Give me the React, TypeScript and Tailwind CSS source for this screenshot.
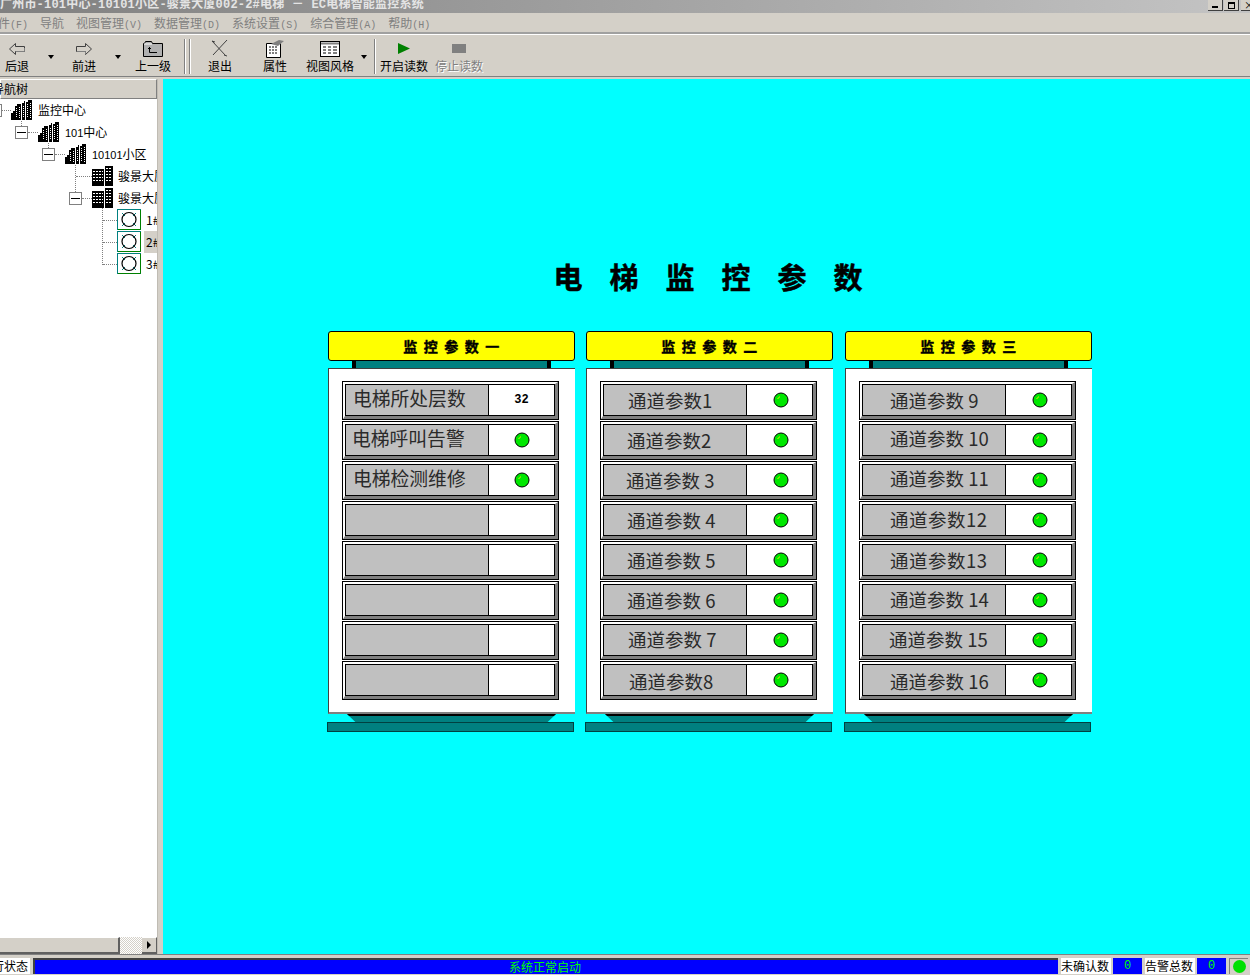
import { ReactNode } from 'react';

function Building({ narrow = false }: { narrow?: boolean }) {
  if (narrow) {
    return (
      <svg width="21" height="20" viewBox="0 0 21 20" className="shrink-0">
        <path d="M0 3h12v17H0zM13 0h8v20h-8z" fill="#000" />
        <path d="M1 5.500h10M1 8.500h10M1 11.500h10M1 14.500h10M14 2.500h6M14 5.500h6M14 8.500h6M14 11.500h6M14 14.500h6" stroke="#fff" strokeWidth="1" strokeDasharray="2 1" />
      </svg>
    );
  }
  return (
    <svg width="21" height="20" viewBox="0 0 21 20" className="shrink-0">
      <path d="M0 13h2v-2h2V6h2V4h4v16H0zM11 3h2V1h1v19h-3zM15 2h2V0h4v20h-6z" fill="#000" />
      <path d="M5.500 8v10M8.500 7v11M16.500 4v14M19.500 3v15M12.500 6v12" stroke="#fff" strokeWidth="1" strokeDasharray="1 1" />
    </svg>
  );
}

function Expander({ shift = '' }: { shift?: string }) {
  return (
    <span className={`w-[13px] h-[13px] shrink-0 border border-[#808080] bg-white flex items-center justify-center ${shift}`}>
      <span className="w-[9px] h-px bg-black" />
    </span>
  );
}

function Dash({ w }: { w: string }) {
  return <span className={`${w} shrink-0 border-t border-dotted border-[#808080]`} />;
}

function Lift() {
  return (
    <svg width="24" height="21" viewBox="0 0 24 21" className="shrink-0 -mt-[2px]">
      <rect x="0.500" y="0.500" width="23" height="20" fill="#fff" stroke="#008080" />
      <path d="M23.500 1v19.500H1" fill="none" stroke="#008000" />
      <path d="M5 4l3 3M19 4l-3 3M5 17l3-3M19 17l-3-3" stroke="#008080" strokeWidth="1" />
      <circle cx="12" cy="10.500" r="7" fill="none" stroke="#000" strokeWidth="1.200" />
    </svg>
  );
}

function Led() {
  return (
    <svg width="16" height="16" viewBox="0 0 16 16">
      <circle cx="8" cy="8" r="7" fill="#00e800" stroke="#000" strokeWidth="1" />
      <path d="M4 7l3-3v1l-2 2z" fill="#e8e800" />
    </svg>
  );
}

function Arrow() {
  return <span className="w-0 h-0 border-x-[3px] border-x-transparent border-t-[4px] border-t-black" />;
}

function ToolButton({ w, label, icon, disabled = false }: { w: string; label: string; icon: ReactNode; disabled?: boolean }) {
  return (
    <div className={`${w} shrink-0 flex flex-col items-center pt-[4px]`}>
      <div className="h-[19px] flex items-center justify-center">{icon}</div>
      <span className={`-mt-[1px] text-[12px] leading-[17px] whitespace-nowrap ${disabled ? 'text-[#808080] [text-shadow:1px_1px_0_#fff]' : 'text-black'}`}>
        {label}
      </span>
    </div>
  );
}

function Divider() {
  return <span className="w-[2px] h-[35px] shrink-0 mt-[4px] border-l border-l-[#808080] border-r border-r-white" />;
}

type RowData = { label?: string; value?: ReactNode; offset?: string };

function Row({ label, value, offset }: RowData) {
  return (
    <div className="h-[39px] mb-px border border-black">
      <div className="h-full border-t-2 border-l-2 border-t-white border-l-white border-b-[3px] border-r-[3px] border-b-[#808080] border-r-[#808080]">
        <div className="h-full flex border border-black">
          <div className={`w-[143px] shrink-0 bg-[#c0c0c0] border-r border-black leading-[26px] text-[#2a2a2a] whitespace-nowrap ${offset ?? ''}`}>
            {label}
          </div>
          <div className="flex-1 bg-white flex items-center justify-center pb-[1px]">{value}</div>
        </div>
      </div>
    </div>
  );
}

function Panel({ title, rows, margin }: { title: string; rows: RowData[]; margin: string }) {
  return (
    <div className={`w-[247px] shrink-0 ${margin}`}>
      <div className="h-[30px] bg-[#ffff00] border border-black rounded-[3px] flex items-center justify-center pl-[6px] text-[14px] font-bold tracking-[6.500px] text-black [-webkit-text-stroke:0.400px_black]">
        {title}
      </div>
      <div className="h-[7px] mx-[24px] bg-[#008080] border-x-[4px] border-black" />
      <div className="h-[346px] bg-white border-t border-l border-[#404040] border-b-2 border-b-[#808080] pt-[12px] pl-[13px] pr-[16px]">
        {rows.map((r, i) => (
          <Row key={i} label={r.label} value={r.value} offset={r.offset} />
        ))}
      </div>
      <div className="h-[8px] mx-[19px] bg-[#008080] border-t-2 border-black [clip-path:polygon(0_0,100%_0,96%_100%,4%_100%)]" />
      <div className="h-[10px] -ml-px mr-px bg-[#008080] border border-[#004040]" />
    </div>
  );
}

const moved = <span className="flex ml-[3px]"><Led /></span>;
const blank: RowData = {};
const panelOne: RowData[] = [
  { label: '电梯所处层数', value: <span className="text-[12px] font-bold font-['Liberation_Mono'] text-black">32</span>, offset: 'pl-[7px] text-[18.800px]' },
  { label: '电梯呼叫告警', value: <Led />, offset: 'pl-[6px] text-[18.800px]' },
  { label: '电梯检测维修', value: <Led />, offset: 'pl-[7px] text-[18.800px]' },
  blank, blank, blank, blank, blank,
];
const panelTwo: RowData[] = [
  { label: '通道参数1', value: moved, offset: 'pl-[24px] pt-[2px] text-[18.500px]' },
  { label: '通道参数2', value: moved, offset: 'pl-[23px] pt-[2px] text-[18.500px]' },
  { label: '通道参数 3', value: moved, offset: 'pl-[22px] pt-[2px] text-[18.500px]' },
  { label: '通道参数 4', value: moved, offset: 'pl-[23px] pt-[2px] text-[18.500px]' },
  { label: '通道参数 5', value: moved, offset: 'pl-[23px] pt-[2px] text-[18.500px]' },
  { label: '通道参数 6', value: moved, offset: 'pl-[23px] pt-[2px] text-[18.500px]' },
  { label: '通道参数 7', value: moved, offset: 'pl-[24px] pt-[1px] text-[18.500px]' },
  { label: '通道参数8', value: moved, offset: 'pl-[25px] pt-[3px] text-[18.500px]' },
];
const panelThree: RowData[] = [
  { label: '通道参数 9', value: moved, offset: 'pl-[27px] pt-[2px] text-[18.500px]' },
  { label: '通道参数 10', value: moved, offset: 'pl-[27px] text-[18.500px]' },
  { label: '通道参数 11', value: moved, offset: 'pl-[27px] text-[18.500px]' },
  { label: '通道参数12', value: moved, offset: 'pl-[27px] pt-[1px] text-[18.500px] tracking-[0.500px]' },
  { label: '通道参数13', value: moved, offset: 'pl-[27px] pt-[2px] text-[18.500px] tracking-[0.500px]' },
  { label: '通道参数 14', value: moved, offset: 'pl-[27px] pt-[1px] text-[18.500px]' },
  { label: '通道参数 15', value: moved, offset: 'pl-[26px] pt-[1px] text-[18.500px]' },
  { label: '通道参数 16', value: moved, offset: 'pl-[27px] pt-[3px] text-[18.500px]' },
];

const menus = [
  ['导航', ''],
  ['视图管理', '(V)'],
  ['数据管理', '(D)'],
  ['系统设置', '(S)'],
  ['综合管理', '(A)'],
  ['帮助', '(H)'],
];

export default function App() {
  return (
    <div className="w-[1250px] h-[975px] overflow-hidden flex flex-col bg-[#d4d0c8] font-['Noto_Sans_CJK_SC','Liberation_Sans',sans-serif]">
      {/* title bar, cut off at the top of the shot */}
      <div className="h-[13px] shrink-0 flex items-start justify-between overflow-hidden bg-gradient-to-r from-[#808080] to-[#c4c4c4]">
        <span className="-mt-[4px] text-[12px] leading-[18px] font-bold tracking-[0.200px] text-[#e4e4e4] whitespace-pre font-['Liberation_Mono','Noto_Sans_CJK_SC',monospace]">
          广州市-101中心-10101小区-骏景大厦002-2#电梯 － EC电梯智能监控系统
        </span>
        <div className="flex gap-px mr-[-6px]">
          <span className="w-[15px] h-[11px] bg-[#d4d0c8] border-r border-b border-[#404040] flex items-end justify-center pb-[2px]"><span className="w-[6px] h-[2px] bg-black" /></span>
          <span className="w-[15px] h-[11px] bg-[#d4d0c8] border-r border-b border-[#404040] flex items-center justify-center"><span className="w-[7px] h-[7px] border border-black border-t-2" /></span>
          <span className="w-[15px] h-[11px] ml-px bg-[#d4d0c8] border-b border-[#404040] text-[10px] leading-[9px] pl-[3px] text-black">×</span>
        </div>
      </div>

      {/* menu */}
      <div className="h-[21px] shrink-0 flex items-center gap-[12px] pt-[2px] border-b-2 border-b-[#a0a0a0] text-[12px] text-[#808080] whitespace-nowrap">
        <span className="-ml-[2px]">件<span className="text-[10px] font-['Liberation_Mono']">(F)</span></span>
        {menus.map(([name, key]) => (
          <span key={name}>
            {name}
            <span className="text-[10px] font-['Liberation_Mono']">{key}</span>
          </span>
        ))}
      </div>

      {/* toolbar */}
      <div className="h-[43px] shrink-0 flex border-t border-t-white border-b border-b-[#808080]">
        <ToolButton w="w-[34px]" label="后退" icon={
          <svg width="16" height="12" viewBox="0 0 16 12"><path d="M6.500.5L.5 6l6 5.500V8.500h9v-5h-9z" fill="#d4d0c8" stroke="#404040" /><path d="M7 8.500h8.500V5" fill="none" stroke="#808080" /></svg>
        } />
        <div className="w-[34px] shrink-0 flex justify-center pt-[20px]"><span className="flex"><Arrow /></span></div>
        <ToolButton w="w-[32px]" label="前进" icon={
          <svg width="16" height="12" viewBox="0 0 16 12"><path d="M9.500.5l6 5.500-6 5.500V8.500h-9v-5h9z" fill="#d4d0c8" stroke="#404040" /><path d="M1 8.500h8.500V11" fill="none" stroke="#808080" /></svg>
        } />
        <div className="w-[35px] shrink-0 flex justify-center pt-[20px]"><span className="flex"><Arrow /></span></div>
        <ToolButton w="w-[36px]" label="上一级" icon={
          <svg width="20" height="17" viewBox="0 0 20 17">
            <path d="M.5 16.500V3.500h1l1-2h6l1 2h10v13z" fill="#b0b0b0" stroke="#000" />
            <path d="M1 4h8" stroke="#fff" />
            <path d="M5 8.500h3M6.500 7v5.500H14" fill="none" stroke="#000" />
          </svg>
        } />
        <span className="w-[13px] shrink-0" />
        <Divider />
        <span className="w-[3px] shrink-0" />
        <Divider />
        <ToolButton w="w-[58px]" label="退出" icon={
          <svg width="18" height="18" viewBox="0 0 18 18"><path d="M1 1l14 15M16 0L2 15M1 1l3 1M16 16l-3-1" fill="none" stroke="#404040" /></svg>
        } />
        <ToolButton w="w-[52px]" label="属性" icon={
          <svg width="18" height="18" viewBox="0 0 18 18">
            <path d="M.5 3.500h14v14H.5z" fill="#fff" stroke="#000" />
            <path d="M3 7h9M3 10h9M3 13h9" stroke="#000" strokeDasharray="2 1" />
            <path d="M5 4l8-4 5 1-6 5z" fill="#808080" />
          </svg>
        } />
        <ToolButton w="w-[58px]" label="视图风格" icon={
          <svg width="20" height="16" viewBox="0 0 20 16">
            <rect x="0.500" y="0.500" width="19" height="15" fill="#fff" stroke="#000" />
            <path d="M1 2.500h18" stroke="#808080" strokeWidth="2" />
            <path d="M3 6h3M8 6h3M13 6h4M3 9h3M8 9h3M13 9h4M3 12h3M8 12h3M13 12h4" stroke="#000" />
          </svg>
        } />
        <div className="w-[10px] shrink-0 flex justify-center pt-[20px]"><span className="flex"><Arrow /></span></div>
        <span className="w-[5px] shrink-0" />
        <Divider />
        <span className="w-[4px] shrink-0" />
        <ToolButton w="w-[48px]" label="开启读数" icon={
          <svg width="12" height="11" viewBox="0 0 12 11"><path d="M0 0l12 5.500L0 11z" fill="#008000" /></svg>
        } />
        <span className="w-[7px] shrink-0" />
        <ToolButton w="w-[48px]" label="停止读数" disabled icon={
          <span className="w-[14px] h-[9px] bg-[#808080] block" />
        } />
      </div>

      <div className="flex-1 min-h-0 flex pt-[2px]">
        {/* navigation tree */}
        <div className="w-[157px] shrink-0 flex flex-col bg-white overflow-hidden">
          <div className="h-[20px] shrink-0 bg-[#d4d0c8] border border-t-white border-l-white border-b-[#808080] border-r-[#808080] text-[12px] leading-[18px] text-black whitespace-nowrap">
            <span className="-ml-[9px] inline-block">导航树</span>
          </div>
          <div className="relative flex-1 text-[12px] text-black whitespace-nowrap">
            <svg className="absolute inset-0 w-[157px] h-[200px]" fill="none">
              <path d="M21.500 22v5M48.500 44v5M75.500 66v28M102.500 109v58" stroke="#808080" strokeDasharray="1 1" />
            </svg>
            <div className="relative h-[22px] flex items-center"><Expander shift="-ml-[11px]" /><Dash w="w-[9px]" /><Building /><span className="ml-[6px]">监控中心</span></div>
            <div className="relative h-[22px] flex items-center pl-[15px]"><Expander /><Dash w="w-[10px]" /><Building /><span className="ml-[6px]"><span className="text-[11px] font-['Liberation_Sans']">101</span>中心</span></div>
            <div className="relative h-[22px] flex items-center pl-[42px]"><Expander /><Dash w="w-[10px]" /><Building /><span className="ml-[6px]"><span className="text-[11px] font-['Liberation_Sans']">10101</span>小区</span></div>
            <div className="relative h-[22px] flex items-center pl-[76px]"><Dash w="w-[16px]" /><Building narrow /><span className="ml-[5px]">骏景大厦</span></div>
            <div className="relative h-[22px] flex items-center pl-[69px]"><Expander /><Dash w="w-[10px]" /><Building narrow /><span className="ml-[5px]">骏景大厦</span></div>
            <div className="relative h-[22px] flex items-center pl-[103px]"><Dash w="w-[14px]" /><Lift /><span className="ml-[5px]">1#</span></div>
            <div className="relative h-[22px] flex items-center pl-[103px]"><Dash w="w-[14px]" /><Lift /><span className="ml-[3px] pl-[2px] flex-1 h-full flex items-center bg-[#d4d0c8]">2#</span></div>
            <div className="relative h-[22px] flex items-center pl-[103px]"><Dash w="w-[14px]" /><Lift /><span className="ml-[5px]">3#</span></div>
          </div>
          <div className="h-[17px] shrink-0 flex">
            <div className="w-[120px] h-full bg-[#d4d0c8] border-t border-t-white border-r-2 border-r-[#606060] border-b-2 border-b-[#606060]" />
            <div className="w-[22px] h-full [background:repeating-conic-gradient(#d4d0c8_0_25%,#ffffff_0_50%)_0_0/2px_2px]" />
            <div className="flex-1 h-full bg-[#d4d0c8] border-t border-t-white border-r border-b-2 border-[#606060] flex items-center justify-center">
              <span className="w-0 h-0 border-y-[4px] border-y-transparent border-l-[4px] border-l-black" />
            </div>
          </div>
        </div>

        {/* splitter */}
        <div className="w-[6px] shrink-0 bg-[#d4d0c8] border-l border-l-[#c0bcb4]" />

        {/* canvas */}
        <div className="flex-1 bg-[#00ffff] pl-[165px] pt-[182px]">
          <div className="w-[764px] h-[30px] flex items-center justify-center -ml-[2px] text-[29px] leading-[30px] font-bold tracking-[27px] text-black pl-[27px] whitespace-nowrap [-webkit-text-stroke:0.500px_black]">
            电梯监控参数
          </div>
          <div className="flex mt-[40px]">
            <Panel title="监控参数一" rows={panelOne} margin="" />
            <Panel title="监控参数二" rows={panelTwo} margin="ml-[11px]" />
            <Panel title="监控参数三" rows={panelThree} margin="ml-[12px]" />
          </div>
        </div>
      </div>

      {/* status bar */}
      <div className="h-[21px] shrink-0 flex items-stretch pt-[3px] pb-px text-[12px] whitespace-nowrap border-t border-t-[#808080]">
        <div className="w-[30px] overflow-hidden bg-white leading-[15px] text-black"><span className="-ml-[20px] inline-block">运行状态</span></div>
        <div className="w-[1025px] ml-[3px] bg-[#0000ff] border-t-2 border-l-2 border-[#404040] flex items-start justify-center pr-[3px] text-[#00ff00] leading-[14px]">系统正常启动</div>
        <div className="w-[50px] ml-[3px] bg-white leading-[15px] text-black">未确认数</div>
        <div className="w-[29px] ml-[2px] bg-[#0000ff] flex items-center justify-center text-[#00ff00] font-['Liberation_Mono']">0</div>
        <div className="w-[50px] ml-[3px] bg-white leading-[15px] text-black">告警总数</div>
        <div className="w-[29px] ml-[2px] bg-[#0000ff] flex items-center justify-center text-[#00ff00] font-['Liberation_Mono']">0</div>
        <div className="w-[19px] ml-[3px] border-t border-l border-[#808080] flex items-center justify-center">
          <span className="w-[13px] h-[13px] rounded-full bg-[#00e000]" />
        </div>
      </div>
    </div>
  );
}
